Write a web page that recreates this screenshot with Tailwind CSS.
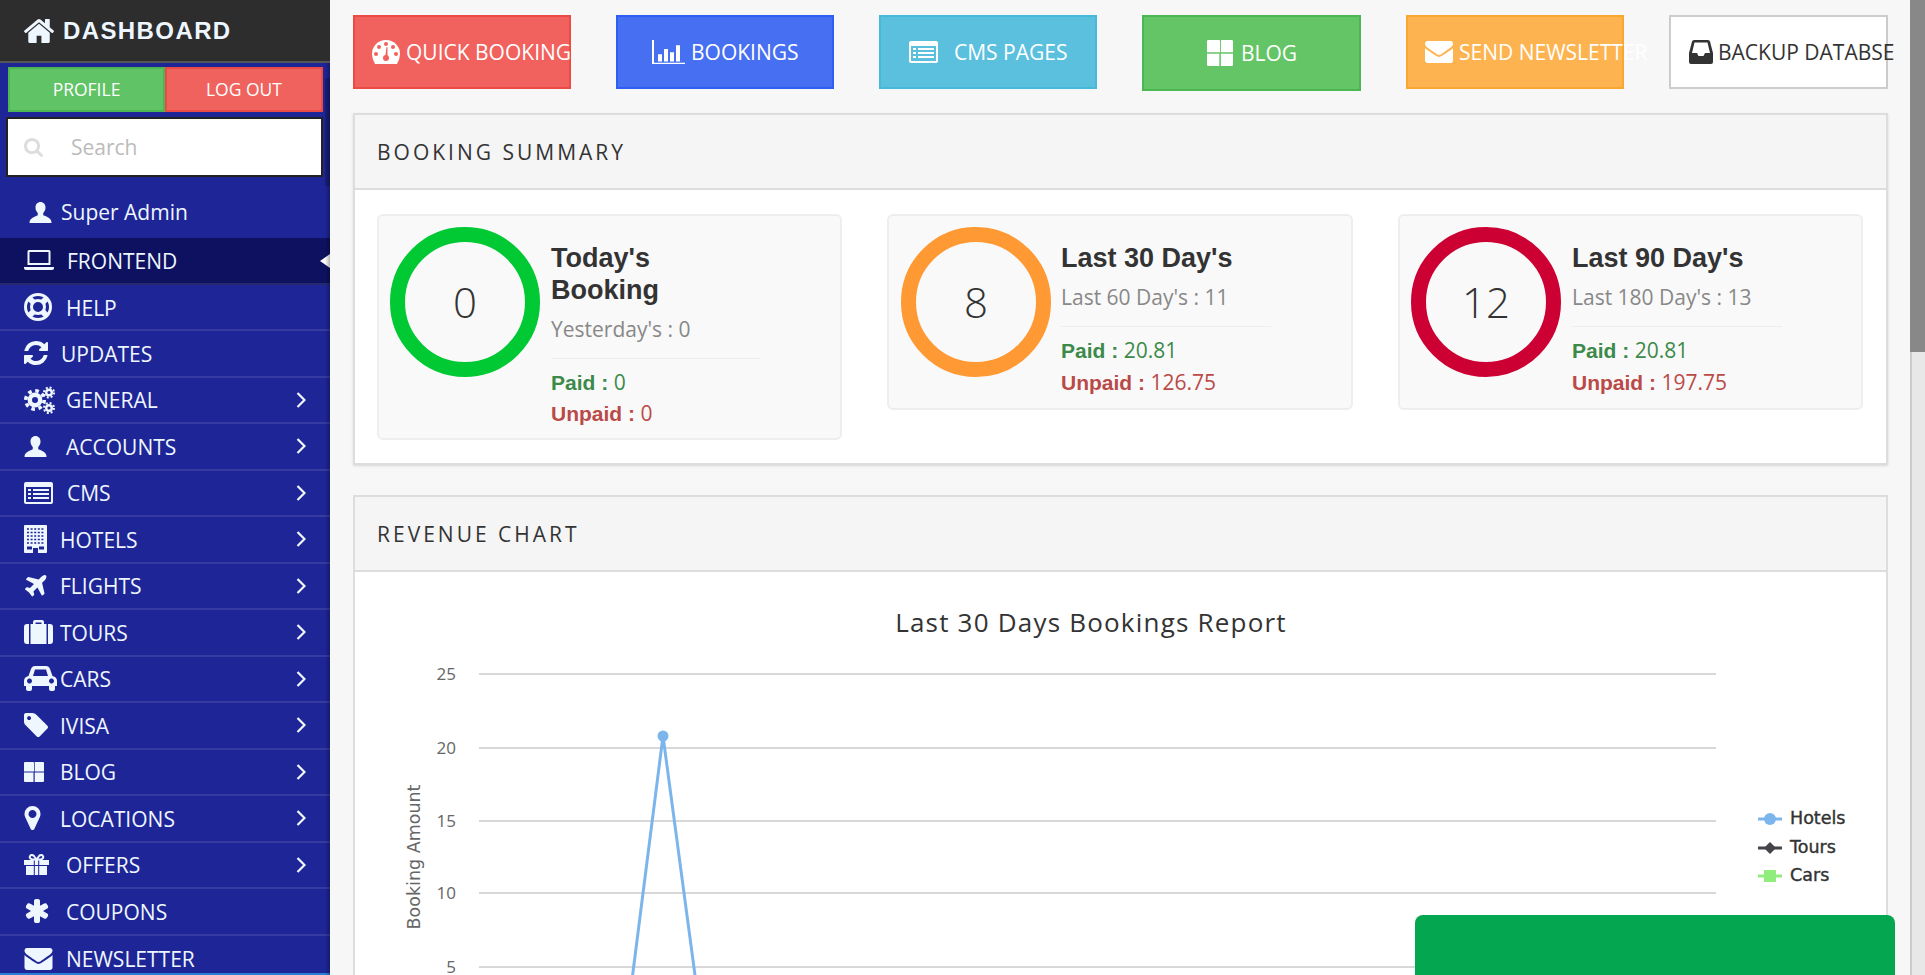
<!DOCTYPE html>
<html lang="en">
<head>
<meta charset="utf-8">
<title>Dashboard</title>
<script src="https://cdn.jsdelivr.net/npm/@tailwindcss/browser@4"></script>
</head>
<body class="relative flex h-[975px] w-[1925px] overflow-hidden bg-[#f7f7f7] font-['Open_Sans',sans-serif] text-[#333]">
<svg class="absolute h-0 w-0" aria-hidden="true">
  <symbol id="i-home" viewBox="90 256 1610 1280"><path d="M1472 992v480q0 26-19 45t-45 19h-384v-384h-256v384h-384q-26 0-45-19t-19-45v-480q0-1 .5-3t.5-3l575-474 575 474q1 2 1 6zm223-69l-62 74q-8 9-21 11h-3q-13 0-21-7l-692-577-692 577q-12 8-24 7-13-2-21-11l-62-74q-8-10-7-23.5t11-21.5l719-599q32-26 76-26t76 26l244 204v-195q0-14 9-23t23-9h192q14 0 23 9t9 23v408l219 182q10 8 11 21.5t-7 23.5z"/></symbol>
  <symbol id="i-search" viewBox="64 128 1664 1664"><path d="M1216 832q0-185-131.500-316.500t-316.500-131.500-316.500 131.500-131.500 316.500 131.500 316.500 316.500 131.500 316.500-131.500 131.500-316.500zm512 832q0 52-38 90t-90 38q-54 0-90-38l-343-342q-179 124-399 124-143 0-273.500-55.500t-225-150-150-225-55.500-273.500 55.500-273.500 150-225 225-150 273.500-55.500 273.500 55.500 225 150 150 225 55.500 273.500q0 220-124 399l343 343q37 37 37 90z"/></symbol>
  <symbol id="i-user" viewBox="0 0 24 23"><path d="M12 0c-3.200 0-5.500 2.500-5.500 6 0 2.500 1 4.500 2.500 6v2.500c-1 1-8 2.500-9 7V23h24v-1.500c-1-5-8-6.500-9-7V12c1.500-1.500 2.500-3.500 2.500-6 0-3.500-2.300-6-5.500-6z"/></symbol>
  <symbol id="i-laptop" viewBox="0 0 30 20"><path fill-rule="evenodd" d="M5 0h20a1.500 1.500 0 0 1 1.500 1.500V15h-23V1.500A1.500 1.500 0 0 1 5 0zM5.500 2v11h19V2z"/><path d="M0 17h30v1a2 2 0 0 1-2 2H2a2 2 0 0 1-2-2z"/></symbol>
  <symbol id="i-help" viewBox="0 0 28 28"><g fill="none" stroke="currentColor"><circle cx="14" cy="14" r="12.500" stroke-width="3"/><circle cx="14" cy="14" r="6.500" stroke-width="3"/><path stroke-width="6" d="M5.500 5.500l4 4M22.500 5.500l-4 4M5.500 22.500l4-4M22.500 22.500l-4-4"/></g></symbol>
  <symbol id="i-refresh" viewBox="128 128 1536 1536"><path d="M1639 1056q0 5-1 7-64 268-268 434.500t-478 166.500q-146 0-282.500-55t-243.500-157l-129 129q-19 19-45 19t-45-19-19-45v-448q0-26 19-45t45-19h448q26 0 45 19t19 45-19 45l-137 137q71 66 161 102t187 36q134 0 250-65t186-179q11-17 53-117 8-23 30-23h192q13 0 22.500 9.500t9.500 22.500zm25-800v448q0 26-19 45t-45 19h-448q-26 0-45-19t-19-45 19-45l138-138q-148-137-349-137-134 0-250 65t-186 179q-11 17-53 117-8 23-30 23h-199q-13 0-22.500-9.500t-9.500-22.500v-7q65-268 270-434.500t480-166.500q146 0 284 55.500t245 156.500l130-129q19-19 45-19t45 19 19 45z"/></symbol>
  <symbol id="i-cogs" viewBox="0 0 31 28"><g fill="none" stroke="currentColor"><circle cx="11" cy="14" r="5.200" stroke-width="4.400"/><circle cx="11" cy="14" r="9.200" stroke-width="3.600" stroke-dasharray="3.600 3.620"/><circle cx="25" cy="6.500" r="2.800" stroke-width="2.400"/><circle cx="25" cy="6.500" r="5" stroke-width="2" stroke-dasharray="2 1.930"/><circle cx="25" cy="22" r="2.800" stroke-width="2.400"/><circle cx="25" cy="22" r="5" stroke-width="2" stroke-dasharray="2 1.930"/></g></symbol>
  <symbol id="i-list" viewBox="0 0 29 22"><path fill-rule="evenodd" d="M2 0h25a2 2 0 0 1 2 2v18a2 2 0 0 1-2 2H2a2 2 0 0 1-2-2V2a2 2 0 0 1 2-2zM2 5v15h25V5z"/><path d="M4 7h3v2H4zM9 7h16v2H9zM4 11h3v2H4zM9 11h16v2H9zM4 15h3v2H4zM9 15h16v2H9z"/></symbol>
  <symbol id="i-plane" viewBox="160 128 1440 1440"><path d="M1568 160q44 52 12 148t-108 172l-161 161 160 696q5 19-12 33l-128 96q-7 6-19 6-4 0-7-1-15-3-21-16l-279-508-259 259 53 194q5 17-8 31l-96 96q-9 9-23 9h-2q-15-2-24-13l-189-252-252-189q-11-7-13-23-1-13 9-25l96-97q9-9 23-9 6 0 8 1l194 53 259-259-508-279q-14-8-17-24-2-16 9-27l128-128q14-13 30-8l665 159 160-160q76-76 172-108t148 12z"/></symbol>
  <symbol id="i-suitcase" viewBox="0 0 29 24"><path d="M9 4V2a2 2 0 0 1 2-2h7a2 2 0 0 1 2 2v2h-2.500V2.500h-6V4z"/><path d="M3 4h2v20H3a3 3 0 0 1-3-3V7a3 3 0 0 1 3-3zM6.500 4h16v20h-16zM24 4h2a3 3 0 0 1 3 3v14a3 3 0 0 1-3 3h-2z"/></symbol>
  <symbol id="i-car" viewBox="0 0 33 25"><path fill-rule="evenodd" d="M7 3Q8 0 11 0h11q3 0 4 3l2.500 7q4.500 1 4.500 5v5h-2v3a2 2 0 0 1-2 2h-2a2 2 0 0 1-2-2v-3H8v3a2 2 0 0 1-2 2H4a2 2 0 0 1-2-2v-3H0v-5q0-4 4.500-5zM11 3.500 9 10h15l-2-6.500zM5.500 12.500a2.500 2.500 0 1 0 .01 0zM27.500 12.500a2.500 2.500 0 1 0 .01 0z"/></symbol>
  <symbol id="i-tag" viewBox="128 128 1515 1515"><path d="M576 448q0-53-37.500-90.500t-90.500-37.500-90.500 37.500-37.500 90.500 37.500 90.500 90.500 37.500 90.500-37.500 37.500-90.500zm1067 576q0 53-37 90l-491 492q-39 37-91 37-53 0-90-37l-715-716q-38-37-64.500-101t-26.500-117v-416q0-52 38-90t90-38h416q53 0 117 26.500t102 64.500l715 714q37 39 37 91z"/></symbol>
  <symbol id="i-th" viewBox="0 0 20 20"><path d="M1 0h8a1 1 0 0 1 1 .7V9.500H0V1a1 1 0 0 1 1-1zM10.700 0H19a1 1 0 0 1 1 1v8.500h-9.300zM0 10.500h9.500V20H1a1 1 0 0 1-1-1zM10.700 10.500H20V19a1 1 0 0 1-1 1h-8.300z"/></symbol>
  <symbol id="i-marker" viewBox="0 128 1024 1536"><path d="M768 640q0-106-75-181t-181-75-181 75-75 181 75 181 181 75 181-75 75-181zm256 0q0 109-33 179l-364 774q-16 33-47.500 52t-67.500 19-67.500-19-46.500-52l-365-774q-33-70-33-179 0-212 150-362t362-150 362 150 150 362z"/></symbol>
  <symbol id="i-gift" viewBox="0 0 25 21"><path d="M0 6h9.800v5H0zM10.800 6h3.400v5h-3.400zM15.200 6H25v5h-9.800zM2 12h7.800v9H2.500a.5.500 0 0 1-.5-.5zM10.800 12h3.400v9h-3.400zM15.200 12H23v8.500a.5.500 0 0 1-.5.500h-7.300z"/><g fill="none" stroke="currentColor" stroke-width="2"><path d="M12.500 5.500 9.500 1.500Q7 .2 6 2.200T8 5.500zM12.500 5.500l3-4Q18 .2 19 2.200T17 5.500z"/></g></symbol>
  <symbol id="i-asterisk" viewBox="128 128 1536 1536"><path d="M1546 1050q46 26 59.500 77.500t-12.500 97.500l-64 110q-26 46-77.500 59.500t-97.500-12.500l-266-153v307q0 52-38 90t-90 38h-128q-52 0-90-38t-38-90v-307l-266 153q-46 26-97.500 12.500t-77.500-59.500l-64-110q-26-46-12.500-97.500t59.500-77.500l266-154-266-154q-46-26-59.500-77.500t12.500-97.500l64-110q26-46 77.500-59.500t97.500 12.500l266 153v-307q0-52 38-90t90-38h128q52 0 90 38t38 90v307l266-153q46-26 97.500-12.500t77.500 59.500l64 110q26 46 12.500 97.500t-59.500 77.500l-266 154z"/></symbol>
  <symbol id="i-envelope" viewBox="0 256 1792 1408"><path d="M1792 710v794q0 66-47 113t-113 47h-1472q-66 0-113-47t-47-113v-794q44 49 101 87 362 246 497 345 57 42 92.500 65.500t94.500 48 110 24.500h2q51 0 110-24.500t94.500-48 92.500-65.500q170-123 498-345 57-39 100-87zm0-294q0 79-49 151t-122 123q-376 261-468 325-10 7-42.500 30.500t-54 38-52 32.500-57.500 27-50 9h-2q-23 0-50-9t-57.500-27-52-32.500-54-38-42.500-30.500q-91-64-262-182.500t-205-142.500q-62-42-117-115.500t-55-136.500q0-78 41.500-130t118.500-52h1472q65 0 112.500 47t47.500 113z"/></symbol>
  <symbol id="i-chev" viewBox="0 0 10 16"><path d="M1.500 1 8.500 8l-7 7" fill="none" stroke="currentColor" stroke-width="2.200"/></symbol>
  <symbol id="i-bar" viewBox="0 0 33 37" preserveAspectRatio="none"><path d="M0 0h2v35h31v2H0zM6 22h4v11H6zM12 14h4v19h-4zM18 19h4v14h-4zM24 8h4v25h-4z"/></symbol>
  <symbol id="i-inbox" viewBox="0 0 24 24"><path fill-rule="evenodd" d="M5 0h14q1.500 0 2 1.500L24 13v9a2 2 0 0 1-2 2H2a2 2 0 0 1-2-2v-9L3 1.500Q3.500 0 5 0zM5.500 2.500 3 13h5l1.500 3h5l1.500-3h5L18.500 2.500z"/></symbol>
</svg>

<aside class="relative flex h-[975px] w-[330px] shrink-0 flex-col overflow-hidden bg-[#1e2596] text-[#eef6ff]">
  <div class="flex h-[63px] shrink-0 items-center border-b-2 border-[#555] bg-[#2d2d2d] pt-[1px] pl-6">
    <svg class="h-[24px] w-[30px] shrink-0 fill-current"><use href="#i-home"/></svg>
    <span class="ml-[9px] font-['Liberation_Sans',sans-serif] text-[24px] font-bold tracking-[1.400px]">DASHBOARD</span>
  </div>
  <div class="mt-1 ml-2 flex h-[45px] w-[315px] shrink-0 text-[17.500px] text-white">
    <div class="flex w-[157px] items-center justify-center border-2 border-[#4cb752] bg-[#60c366]">PROFILE</div>
    <div class="flex w-[158px] items-center justify-center border-2 border-[#ec4a45] bg-[#f0625e]">LOG OUT</div>
  </div>
  <div class="mt-[5px] ml-[6px] flex h-[60px] w-[317px] shrink-0 items-center border-2 border-[#222] bg-white pl-4">
    <svg class="h-[19px] w-[19px] shrink-0 fill-[#ddd]"><use href="#i-search"/></svg>
    <span class="ml-[28px] pt-[2px] text-[21px] text-[#bbb]">Search</span>
  </div>
  <div class="flex h-[61px] shrink-0 items-center pt-[10px] pl-[29px] text-[21px]">
    <svg class="h-[21px] w-[23px] shrink-0 fill-current"><use href="#i-user"/></svg>
    <span class="ml-[9px] pt-px">Super Admin</span>
  </div>
  <nav class="flex flex-col text-[21px]">
    <div class="relative flex h-[46.5px] shrink-0 items-center border-b-2 border-white/10 bg-[#0d1160] pl-6">
      <span class="flex w-[43px]"><svg class="h-[20px] w-[30px] fill-current"><use href="#i-laptop"/></svg></span><span class="pt-[3px]">FRONTEND</span>
      <span class="absolute top-[16px] right-0 h-0 w-0 border-y-[7px] border-r-[10px] border-y-transparent border-r-white"></span>
    </div>
    <div class="flex h-[46.5px] shrink-0 items-center border-b-2 border-white/10 pl-6">
      <span class="flex w-[42px]"><svg class="h-[28px] w-[28px] fill-current"><use href="#i-help"/></svg></span><span class="pt-[3px]">HELP</span>
    </div>
    <div class="flex h-[46.5px] shrink-0 items-center border-b-2 border-white/10 pl-6">
      <span class="flex w-[37px]"><svg class="h-[24px] w-[24px] fill-current"><use href="#i-refresh"/></svg></span><span class="pt-[3px]">UPDATES</span>
    </div>
    <div class="flex h-[46.5px] shrink-0 items-center border-b-2 border-white/10 pl-6">
      <span class="flex w-[42px]"><svg class="h-[28px] w-[31px] fill-current"><use href="#i-cogs"/></svg></span><span class="pt-[2px]">GENERAL</span>
      <svg class="ml-auto mr-[24px] h-[16px] w-[10px]"><use href="#i-chev"/></svg>
    </div>
    <div class="flex h-[46.5px] shrink-0 items-center border-b-2 border-white/10 pl-6">
      <span class="flex w-[42px]"><svg class="h-[21px] w-[23px] fill-current"><use href="#i-user"/></svg></span><span class="pt-[3px]">ACCOUNTS</span>
      <svg class="ml-auto mr-[24px] h-[16px] w-[10px]"><use href="#i-chev"/></svg>
    </div>
    <div class="flex h-[46.5px] shrink-0 items-center border-b-2 border-white/10 pl-6">
      <span class="flex w-[43px]"><svg class="h-[22px] w-[29px] fill-current"><use href="#i-list"/></svg></span><span class="pt-[2px]">CMS</span>
      <svg class="ml-auto mr-[24px] h-[16px] w-[10px]"><use href="#i-chev"/></svg>
    </div>
    <div class="flex h-[46.5px] shrink-0 items-center border-b-2 border-white/10 pl-6">
      <span class="flex w-[36px]">
        <svg class="h-[28px] w-[23px]" viewBox="0 0 23 28"><rect width="23" height="28" rx="1" fill="currentColor"/><g stroke="#1e2596" stroke-width="1.500" stroke-dasharray="2 1.600"><path d="M3 4h17M3 7.500h17M3 11h17M3 14.500h17M3 18h17"/></g><path d="M3 21.500h5v3H3zM15 21.500h5v3h-5zM9 23h5v5H9z" fill="#1e2596"/></svg>
      </span><span class="pt-[3px]">HOTELS</span>
      <svg class="ml-auto mr-[24px] h-[16px] w-[10px]"><use href="#i-chev"/></svg>
    </div>
    <div class="flex h-[46.5px] shrink-0 items-center border-b-2 border-white/10 pl-6">
      <span class="flex w-[36px]"><svg class="h-[22px] w-[23px] fill-current"><use href="#i-plane"/></svg></span><span class="pt-[2px]">FLIGHTS</span>
      <svg class="ml-auto mr-[24px] h-[16px] w-[10px]"><use href="#i-chev"/></svg>
    </div>
    <div class="flex h-[46.5px] shrink-0 items-center border-b-2 border-white/10 pl-6">
      <span class="flex w-[36px]"><svg class="h-[24px] w-[29px] fill-current"><use href="#i-suitcase"/></svg></span><span class="pt-[3px]">TOURS</span>
      <svg class="ml-auto mr-[24px] h-[16px] w-[10px]"><use href="#i-chev"/></svg>
    </div>
    <div class="flex h-[46.5px] shrink-0 items-center border-b-2 border-white/10 pl-6">
      <span class="flex w-[36px]"><svg class="h-[25px] w-[33px] shrink-0 fill-current"><use href="#i-car"/></svg></span><span class="pt-[2px]">CARS</span>
      <svg class="ml-auto mr-[24px] h-[16px] w-[10px]"><use href="#i-chev"/></svg>
    </div>
    <div class="flex h-[46.5px] shrink-0 items-center border-b-2 border-white/10 pl-6">
      <span class="flex w-[36px]"><svg class="h-[24px] w-[24px] fill-current"><use href="#i-tag"/></svg></span><span class="pt-[3px]">IVISA</span>
      <svg class="ml-auto mr-[24px] h-[16px] w-[10px]"><use href="#i-chev"/></svg>
    </div>
    <div class="flex h-[46.5px] shrink-0 items-center border-b-2 border-white/10 pl-6">
      <span class="flex w-[36px]"><svg class="h-[20px] w-[20px] fill-current"><use href="#i-th"/></svg></span><span class="pt-[2px]">BLOG</span>
      <svg class="ml-auto mr-[24px] h-[16px] w-[10px]"><use href="#i-chev"/></svg>
    </div>
    <div class="flex h-[46.5px] shrink-0 items-center border-b-2 border-white/10 pl-6">
      <span class="flex w-[36px]"><svg class="h-[24px] w-[17px] fill-current"><use href="#i-marker"/></svg></span><span class="pt-[3px]">LOCATIONS</span>
      <svg class="ml-auto mr-[24px] h-[16px] w-[10px]"><use href="#i-chev"/></svg>
    </div>
    <div class="flex h-[46.5px] shrink-0 items-center border-b-2 border-white/10 pl-6">
      <span class="flex w-[42px]"><svg class="h-[21px] w-[25px] fill-current"><use href="#i-gift"/></svg></span><span class="pt-[2px]">OFFERS</span>
      <svg class="ml-auto mr-[24px] h-[16px] w-[10px]"><use href="#i-chev"/></svg>
    </div>
    <div class="flex h-[46.5px] shrink-0 items-center border-b-2 border-white/10 pl-[25px]">
      <span class="flex w-[41px]"><svg class="h-[24px] w-[24px] fill-current"><use href="#i-asterisk"/></svg></span><span class="pt-[3px]">COUPONS</span>
    </div>
    <div class="flex h-[46.5px] shrink-0 items-center pl-6">
      <span class="flex w-[42px]"><svg class="h-[22px] w-[29px] fill-current"><use href="#i-envelope"/></svg></span><span class="pt-px">NEWSLETTER</span>
    </div>
  </nav>
  <div class="absolute right-0 bottom-0 left-0 h-[2px] bg-[#2a7fd4]"></div>
  <div class="absolute top-[63px] right-0 bottom-0 w-[5px] bg-linear-to-r from-transparent to-black/30"></div>
  <div class="absolute top-[78px] right-0 h-[108px] w-[5px] bg-black/20"></div>
</aside>

<main class="h-[975px] w-[1580px] shrink-0 overflow-hidden pt-[15px] pl-[23px]">
  <div class="flex h-[76px] items-start gap-[45px] text-[21px] text-white">
    <div class="flex h-[74px] w-[218px] shrink-0 items-center whitespace-nowrap border-2 border-[#ec4a45] bg-[#f1615d] pl-[17px]">
      <svg class="h-[24px] w-[28px] shrink-0" viewBox="0 0 28 24"><path fill="currentColor" d="M14 0a14 14 0 0 1 14 14q0 5-3 10H3q-3-5-3-10A14 14 0 0 1 14 0z"/><g fill="#f1615d"><circle cx="14" cy="4" r="2"/><circle cx="7" cy="7" r="2"/><circle cx="21" cy="7" r="2"/><circle cx="4" cy="14" r="2"/><circle cx="24" cy="14" r="2"/><circle cx="14" cy="18" r="3"/><path d="M13 18 14.500 7l1 .2L15.500 18z"/></g></svg>
      <span class="ml-[6px] pt-[2px]">QUICK BOOKING</span>
    </div>
    <div class="flex h-[74px] w-[218px] shrink-0 items-center whitespace-nowrap border-2 border-[#2f5ef5] bg-[#476ff2] pl-[34px]">
      <svg class="h-[24px] w-[33px] shrink-0 fill-current"><use href="#i-bar"/></svg>
      <span class="ml-[6px] pt-[2px]">BOOKINGS</span>
    </div>
    <div class="flex h-[74px] w-[218px] shrink-0 items-center whitespace-nowrap border-2 border-[#46b8da] bg-[#5bc0de] pl-[28px]">
      <svg class="h-[22px] w-[29px] shrink-0 fill-current"><use href="#i-list"/></svg>
      <span class="ml-[16px] pt-[2px]">CMS PAGES</span>
    </div>
    <div class="flex h-[76px] w-[219px] shrink-0 items-center whitespace-nowrap border-2 border-[#4cb752] bg-[#64c567] pl-[63px]">
      <svg class="h-[26px] w-[26px] shrink-0 fill-current"><use href="#i-th"/></svg>
      <span class="ml-[8px] pt-[2px]">BLOG</span>
    </div>
    <div class="flex h-[74px] w-[218px] shrink-0 items-center whitespace-nowrap border-2 border-[#faa732] bg-[#fdb450] pl-[17px]">
      <svg class="h-[22px] w-[28px] shrink-0 fill-current"><use href="#i-envelope"/></svg>
      <span class="ml-[6px] pt-[2px]">SEND NEWSLETTER</span>
    </div>
    <div class="flex h-[74px] w-[219px] shrink-0 items-center whitespace-nowrap border-2 border-[#ccc] bg-white pl-[18px] text-[#333]">
      <svg class="h-[24px] w-[24px] shrink-0 fill-current"><use href="#i-inbox"/></svg>
      <span class="ml-[5px] pt-[2px]">BACKUP DATABSE</span>
    </div>
  </div>

  <section class="mt-[22px] w-[1535px] border-2 border-[#ddd] bg-white shadow-sm">
    <div class="flex h-[73px] items-center bg-[#f5f5f5] pt-[2px] pl-[22px] text-[21px] tracking-[3px]">BOOKING SUMMARY</div>
    <div class="flex items-start gap-[45px] border-t-2 border-[#ddd] px-[22px] pt-6 pb-[23px]">
      <div class="flex w-[465px] items-start rounded-[6px] border-2 border-[#eee] bg-[#f9f9f9] pt-[11px] pb-[9px] pl-[11px]">
        <div class="flex h-[150px] w-[150px] shrink-0 items-center justify-center rounded-full border-[15px] border-[#00c934] pb-[2px] text-[42px] font-light">0</div>
        <div class="ml-[11px] mt-[15px] w-[210px]">
          <div class="font-['Liberation_Sans',sans-serif] text-[27px] leading-[32px] font-bold">Today's<br>Booking</div>
          <div class="mt-[9px] text-[21px] leading-[28px] text-[#888]">Yesterday's : 0</div>
          <div class="mt-[15px] h-px bg-[#eee]"></div>
          <div class="mt-[8px] text-[21px] leading-[31px] text-[#3c8a4a]"><b class="font-['Liberation_Sans',sans-serif]">Paid :</b> 0</div>
          <div class="text-[21px] leading-[31px] text-[#b94a48]"><b class="font-['Liberation_Sans',sans-serif]">Unpaid :</b> 0</div>
        </div>
      </div>
      <div class="flex w-[466px] items-start rounded-[6px] border-2 border-[#eee] bg-[#f9f9f9] pt-[11px] pb-[10px] pl-[12px]">
        <div class="flex h-[150px] w-[150px] shrink-0 items-center justify-center rounded-full border-[15px] border-[#ff9933] pb-[2px] text-[42px] font-light">8</div>
        <div class="ml-[10px] mt-[15px] w-[210px]">
          <div class="font-['Liberation_Sans',sans-serif] text-[27px] leading-[32px] font-bold whitespace-nowrap">Last 30 Day's</div>
          <div class="mt-[9px] text-[21px] leading-[28px] text-[#888]">Last 60 Day's : 11</div>
          <div class="mt-[15px] h-px bg-[#eee]"></div>
          <div class="mt-[8px] text-[21px] leading-[31px] text-[#3c8a4a]"><b class="font-['Liberation_Sans',sans-serif]">Paid :</b> 20.81</div>
          <div class="pt-px text-[21px] leading-[31px] text-[#b94a48]"><b class="font-['Liberation_Sans',sans-serif]">Unpaid :</b> 126.75</div>
        </div>
      </div>
      <div class="flex w-[465px] items-start rounded-[6px] border-2 border-[#eee] bg-[#f9f9f9] pt-[11px] pb-[10px] pl-[11px]">
        <div class="flex h-[150px] w-[150px] shrink-0 items-center justify-center rounded-full border-[15px] border-[#cc0033] pb-[2px] text-[42px] font-light">12</div>
        <div class="ml-[11px] mt-[15px] w-[210px]">
          <div class="font-['Liberation_Sans',sans-serif] text-[27px] leading-[32px] font-bold whitespace-nowrap">Last 90 Day's</div>
          <div class="mt-[9px] text-[21px] leading-[28px] text-[#888]">Last 180 Day's : 13</div>
          <div class="mt-[15px] h-px bg-[#eee]"></div>
          <div class="mt-[8px] text-[21px] leading-[31px] text-[#3c8a4a]"><b class="font-['Liberation_Sans',sans-serif]">Paid :</b> 20.81</div>
          <div class="pt-px text-[21px] leading-[31px] text-[#b94a48]"><b class="font-['Liberation_Sans',sans-serif]">Unpaid :</b> 197.75</div>
        </div>
      </div>
    </div>
  </section>

  <section class="mt-[30px] w-[1535px] border-2 border-[#ddd] bg-white">
    <div class="flex h-[73px] items-center bg-[#f5f5f5] pt-[2px] pl-[22px] text-[21px] tracking-[3px]">REVENUE CHART</div>
    <div class="border-t-2 border-[#ddd]">
      <svg class="block h-[500px] w-[1531px]" viewBox="355 572 1531 500">
        <text x="1091" y="632" text-anchor="middle" font-size="26" letter-spacing="1.200" fill="#333">Last 30 Days Bookings Report</text>
        <g stroke="#ccc" stroke-width="1.500">
          <path d="M479 674H1716M479 748H1716M479 821H1716M479 893H1716M479 967H1716"/>
        </g>
        <g font-size="17" fill="#666" text-anchor="end">
          <text x="456" y="680">25</text>
          <text x="456" y="754">20</text>
          <text x="456" y="827">15</text>
          <text x="456" y="899">10</text>
          <text x="456" y="973">5</text>
        </g>
        <text transform="translate(420 857) rotate(-90)" text-anchor="middle" font-family="DejaVu Sans" font-size="17.500" fill="#666">Booking Amount</text>
        <path d="M625 1035 663 736 703 1035" fill="none" stroke="#7cb5ec" stroke-width="3"/>
        <circle cx="663" cy="736" r="5.500" fill="#7cb5ec"/>
        <g stroke-width="3">
          <path d="M1758 819h24" stroke="#7cb5ec"/><circle cx="1770" cy="819" r="6" fill="#7cb5ec"/>
          <path d="M1758 848h24" stroke="#434348"/><path d="M1770 842l6 6-6 6-6-6z" fill="#434348"/>
          <path d="M1758 876h24" stroke="#90ed7d"/><path d="M1764 870h12v12h-12z" fill="#90ed7d"/>
        </g>
        <g font-family="DejaVu Sans" font-size="17.500" fill="#333" stroke="#333" stroke-width="0.400">
          <text x="1790" y="824">Hotels</text>
          <text x="1790" y="853">Tours</text>
          <text x="1790" y="881">Cars</text>
        </g>
      </svg>
    </div>
  </section>
</main>

<div class="flex h-[975px] w-[15px] shrink-0 flex-col">
  <div class="h-[352px] bg-[#888]"></div>
  <div class="flex-1 border-l-2 border-[#ccc] bg-[#e8e8e8]"></div>
</div>

<div class="absolute top-[915px] left-[1415px] h-[60px] w-[480px] rounded-t-[8px] bg-[#04a64f]"></div>
</body>
</html>
